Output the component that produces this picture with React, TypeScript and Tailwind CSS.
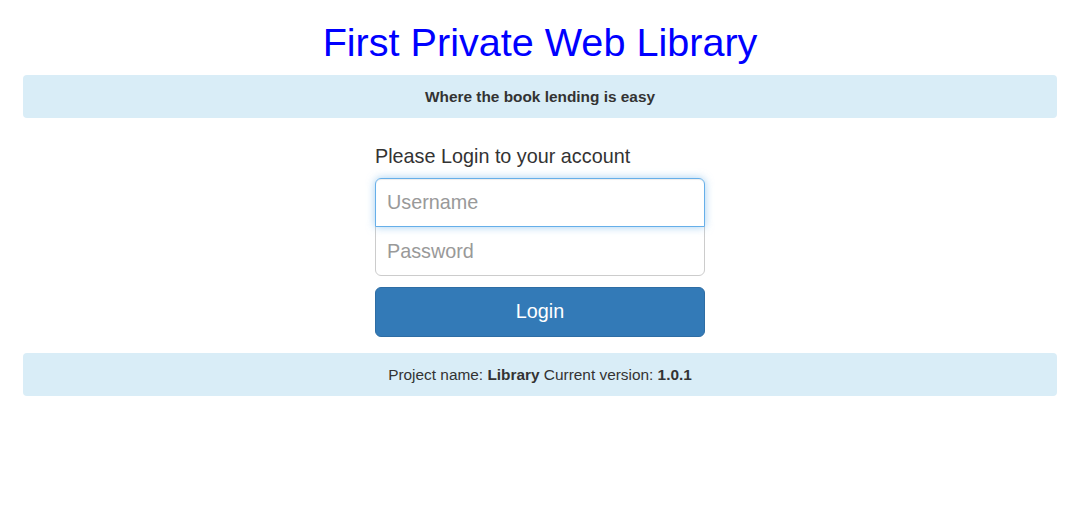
import React from "react";

const App: React.FC = () => {
  return (
    <div className="min-h-[526px] bg-white font-['Liberation_Sans',Arial,sans-serif] text-[#333]">
      <div className="ml-[23px] mr-[25px] pt-[20px]">
        <h1 className="text-center text-[39.6px] leading-[44px] text-[#0000ff]">
          First Private Web Library
        </h1>
        <div className="mt-[11px] flex h-[43px] items-center justify-center rounded-[4px] bg-[#d9edf7] text-[15.4px] font-bold">
          Where the book lending is easy
        </div>

        <form
          className="mx-auto mt-[25px] flex w-[330px] flex-col"
          onSubmit={(e) => e.preventDefault()}
        >
          <h2 className="mb-[9px] text-[19.8px] leading-[26px] text-[#333]">
            Please Login to your account
          </h2>
          <input
            type="text"
            placeholder="Username"
            autoFocus
            className="relative z-10 h-[49px] rounded-t-[6px] border border-[#66afe9] px-[11px] text-[19.8px] text-[#555] shadow-[inset_0_1px_1px_rgba(0,0,0,0.075),0_0_8px_rgba(102,175,233,0.6)] outline-none placeholder:text-[#999]"
          />
          <input
            type="password"
            placeholder="Password"
            className="-mt-px h-[50px] rounded-b-[6px] border border-[#ccc] px-[11px] text-[19.8px] text-[#555] outline-none placeholder:text-[#999]"
          />
          <button
            type="submit"
            className="mt-[11px] h-[50px] rounded-[6px] border border-[#2e6da4] bg-[#337ab7] text-[19.8px] text-white"
          >
            Login
          </button>
        </form>

        <div className="mt-[16px] flex h-[43px] items-center justify-center rounded-[4px] bg-[#d9edf7] text-[15.4px]">
          <span>
            Project name: <b>Library</b> Current version: <b>1.0.1</b>
          </span>
        </div>
      </div>
    </div>
  );
};

export default App;
